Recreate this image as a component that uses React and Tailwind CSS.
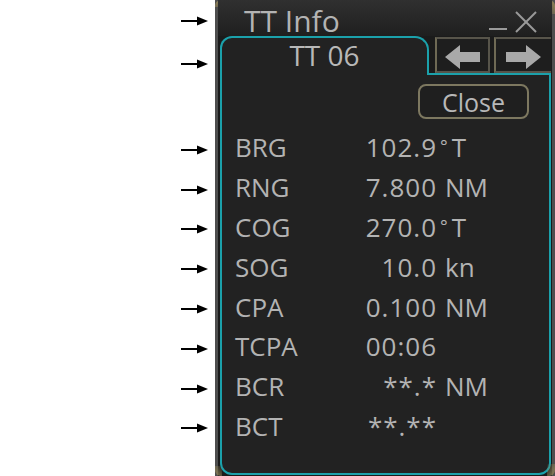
import React from "react";

const font = { fontFamily: '"Open Sans", "Noto Sans", sans-serif' };

function Pointer() {
  return (
    <svg width="28" height="10" viewBox="0 0 28 10">
      <line x1="0" y1="5" x2="18" y2="5" stroke="#000" strokeWidth="2" />
      <polygon points="16,0.5 27,5 16,9.5" fill="#000" />
    </svg>
  );
}

function ArrowLeft() {
  return (
    <svg width="36" height="24" viewBox="0 0 36 24">
      <polygon points="0,12 15,0 15,7 35,7 35,17 15,17 15,24" fill="#a9a9a9" />
    </svg>
  );
}
function ArrowRight() {
  return (
    <svg width="36" height="24" viewBox="0 0 36 24">
      <polygon points="35,12 20,0 20,7 0,7 0,17 20,17 20,24" fill="#a9a9a9" />
    </svg>
  );
}

const rows = [
  { l: "BRG", v: "102.9", u: "deg" },
  { l: "RNG", v: "7.800", u: "NM" },
  { l: "COG", v: "270.0", u: "deg" },
  { l: "SOG", v: "10.0", u: "kn" },
  { l: "CPA", v: "0.100", u: "NM" },
  { l: "TCPA", v: "00:06", u: "" },
  { l: "BCR", v: "**.*", u: "NM" },
  { l: "BCT", v: "**.**", u: "" },
];

export default function App() {
  return (
    <div className="flex w-[555px] h-[476px] bg-white overflow-hidden" style={font}>
      <div className="w-[215px] shrink-0 flex flex-col pl-[181px]">
        <div className="h-[42px] flex items-center"><Pointer /></div>
        <div className="h-[44px] flex items-center"><Pointer /></div>
        <div className="h-[44px]" />
        {rows.map((r) => (
          <div key={r.l} className="h-[39.8px] flex items-center"><Pointer /></div>
        ))}
      </div>

      <div className="relative w-[340px] h-[476px] shrink-0 bg-[#1b1b1b] border-l-[3px] border-r-[3px] border-[#4e4e4e] flex flex-col">
        <div className="absolute -left-[3px] top-0 w-[11px] h-[7px] rounded-tl-[6px] bg-gradient-to-br from-[#a08f5a] to-transparent" />
        <div className="absolute -right-[3px] top-0 w-[8px] h-[14px] rounded-tr-[6px] bg-gradient-to-bl from-[#9a8a58] to-transparent" />
        <div className="absolute -left-[3px] bottom-0 w-[7px] h-[10px] rounded-bl-[6px] bg-gradient-to-tr from-[#8f8256] to-transparent" />
        <div className="absolute -right-[3px] bottom-0 w-[8px] h-[12px] rounded-br-[6px] bg-gradient-to-tl from-[#8f8256] to-transparent" />

        <div className="h-[36px] shrink-0 flex items-start bg-gradient-to-b from-[#303030] to-[#1f1f1f] pl-[26px] relative">
          <span className="text-[30px] leading-[36px] mt-[3px] text-[#b3b3b3]">TT Info</span>
          <div className="absolute left-[271px] top-[28px] w-[18px] h-[2px] bg-[#9a9a9a]" />
          <svg className="absolute left-[297px] top-[11px]" width="22" height="22" viewBox="0 0 22 22">
            <line x1="1" y1="1" x2="21" y2="21" stroke="#9a9a9a" strokeWidth="2" />
            <line x1="21" y1="1" x2="1" y2="21" stroke="#9a9a9a" strokeWidth="2" />
          </svg>
        </div>

        <div className="flex-1 flex flex-col pl-[2px] pr-[1px] pb-[1px]">
          <div className="h-[39px] flex shrink-0">
            <div className="w-[209px] border-t-2 border-l-2 border-r-2 border-[#1ba1ab] rounded-tl-[12px] rounded-tr-[14px] bg-[#222222] flex justify-center">
              <span className="text-[28px] leading-[36px] text-[#b8b8b8] -mt-[1px]">TT 06</span>
            </div>
            <div className="flex-1 border-b-2 border-[#1ba1ab] flex pl-[6px] pt-[1px] gap-[4px]">
              <div className="w-[55px] h-[36px] border-2 border-[#57544a] border-l-[#6f6a55] bg-[#1e1e1e] flex items-center justify-center pt-[3px]">
                <ArrowLeft />
              </div>
              <div className="flex-1 h-[36px] border-2 border-r-0 border-[#57544a] border-l-[#6f6a55] bg-[#1e1e1e] flex items-center justify-center pt-[3px]">
                <ArrowRight />
              </div>
            </div>
          </div>

          <div className="flex-1 border-l-2 border-r-2 border-b-2 border-[#1ba1ab] rounded-b-[12px] bg-[#222222] flex flex-col">
            <div className="flex justify-end pr-[20px] pt-[9px]">
              <div className="w-[111px] h-[35px] rounded-[8px] border-2 border-[#7d7860] bg-[#1f1f1f] flex items-center justify-center">
                <span className="text-[25px] leading-[30px] text-[#b8b8b8]">Close</span>
              </div>
            </div>
            <div className="flex flex-col pl-[13px] pt-[9px]">
              {rows.map((r) => (
                <div key={r.l} className="h-[39.8px] flex items-center text-[26px] text-[#b3b3b3]">
                  <span className="w-[130px]">{r.l}</span>
                  <span className="w-[72px] text-right tracking-[1px]">{r.v}</span>
                  {r.u === "deg" && (
                    <span className="ml-[3px]">
                      <span className="text-[18px] relative -top-[4px]">°</span>
                      <span className="ml-[4px]">T</span>
                    </span>
                  )}
                  {(r.u === "NM" || r.u === "kn") && <span className="ml-[8px]">{r.u}</span>}
                </div>
              ))}
            </div>
          </div>
        </div>
      </div>
    </div>
  );
}
